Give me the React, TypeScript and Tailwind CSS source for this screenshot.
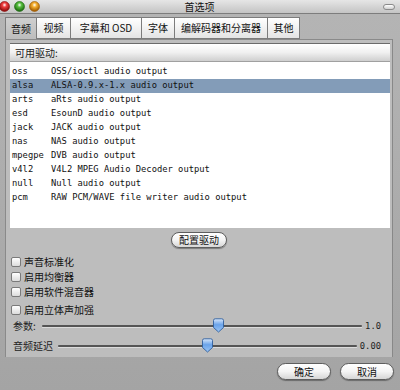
import React from "react";

const drivers: [string, string][] = [
  ["oss", "OSS/ioctl audio output"],
  ["alsa", "ALSA-0.9.x-1.x audio output"],
  ["arts", "aRts audio output"],
  ["esd", "EsounD audio output"],
  ["jack", "JACK audio output"],
  ["nas", "NAS audio output"],
  ["mpegpe", "DVB audio output"],
  ["v4l2", "V4L2 MPEG Audio Decoder output"],
  ["null", "Null audio output"],
  ["pcm", "RAW PCM/WAVE file writer audio output"],
];

const tabs: [string, string][] = [
  ["音频", "w-[32px]"],
  ["视频", "w-[34px]"],
  ["字幕和 OSD", "w-[71px]"],
  ["字体", "w-[33px]"],
  ["编解码器和分离器", "w-[93px]"],
  ["其他", "w-[32px]"],
];

function Light({ c1, c2 }: { c1: string; c2: string }) {
  return (
    <svg width="11" height="11" viewBox="0 0 11 11">
      <defs>
        <radialGradient id={"g" + c1.slice(1)} cx="50%" cy="35%" r="60%">
          <stop offset="0%" stopColor="#ffffff" stopOpacity="0.9" />
          <stop offset="35%" stopColor={c1} />
          <stop offset="100%" stopColor={c2} />
        </radialGradient>
      </defs>
      <circle cx="5.5" cy="5.5" r="5" fill={"url(#g" + c1.slice(1) + ")"} stroke={c2} strokeWidth="0.6" />
    </svg>
  );
}

function Checkbox({ label }: { label: string }) {
  return (
    <div className="flex items-center h-[15px]">
      <div className="w-[10px] h-[10px] rounded-[2px] border border-[#7a7a7a] bg-gradient-to-b from-white to-[#dcdcdc]" />
      <span className="ml-[3px] text-[10px] leading-none text-[#111]">{label}</span>
    </div>
  );
}

function Thumb() {
  return (
    <svg width="13" height="15" viewBox="0 0 13 15">
      <defs>
        <linearGradient id="th" x1="0" y1="0" x2="0" y2="1">
          <stop offset="0%" stopColor="#dbe9fb" />
          <stop offset="45%" stopColor="#6aa3ea" />
          <stop offset="100%" stopColor="#9cc6f5" />
        </linearGradient>
      </defs>
      <path d="M1.5 2.5 Q1.5 0.8 3.2 0.8 L9.8 0.8 Q11.5 0.8 11.5 2.5 L11.5 9.5 L6.5 14 L1.5 9.5 Z" fill="url(#th)" stroke="#2f5f9e" strokeWidth="0.9" />
    </svg>
  );
}

function Slider({ label, value, thumbLeft, labelW }: { label: string; value: string; thumbLeft: string; labelW: string }) {
  return (
    <div className="flex items-center h-[16px] pl-[7px]">
      <span className={"text-[10px] leading-none text-[#222] " + labelW}>{label}</span>
      <div className="relative flex-1 h-[4px]">
        <div className="absolute left-0 right-0 top-[1px] h-[2px] bg-[#555] rounded-full" />
        <div className="absolute left-0 right-0 top-[3px] h-[1px] bg-[#dcdcdc]" />
        <div className={"absolute top-[-6px] " + thumbLeft}>
          <Thumb />
        </div>
      </div>
      <span className="text-[8.8px] leading-none text-[#222] font-['DejaVu_Sans_Mono',monospace] ml-[3px] mr-[11px]">{value}</span>
    </div>
  );
}

function PillButton({ label, w }: { label: string; w: string }) {
  return (
    <div className={"h-[17px] rounded-full border border-[#5e5e5e] bg-gradient-to-b from-white via-[#f4f4f4] to-[#d6d6d6] flex items-center justify-center text-[10px] leading-none text-[#111] shadow-[0_1px_1px_rgba(0,0,0,0.35)] " + w}>
      {label}
    </div>
  );
}

export default function App() {
  return (
    <div className="w-[400px] h-[390px] flex flex-col bg-[#a6a6a6] overflow-hidden font-['Noto_Sans_CJK_SC',sans-serif]">
      {/* title bar */}
      <div className="h-[14px] flex items-center bg-gradient-to-b from-[#e6e6e6] to-[#c4c4c4] border-b border-[#7d7d7d]">
        <div className="flex items-center gap-[4px] -ml-[1px] w-[42px] -mt-[1px]">
          <Light c1="#f04040" c2="#8c0c0c" />
          <Light c1="#58c040" c2="#1d6a10" />
          <Light c1="#f6b030" c2="#a05a00" />
        </div>
        <div className="flex-1 text-center text-[10px] leading-[12px] text-[#111]">首选项</div>
        <div className="w-[42px] flex justify-end">
          <div className="w-[12px] h-[6px] rounded-full border border-[#8a8a8a] bg-gradient-to-b from-white to-[#d0d0d0] mr-[5px]" />
        </div>
      </div>

      {/* body */}
      <div className="flex-1 flex flex-col pl-[5px] pr-[8px] bg-gradient-to-b from-[#b4b4b4] to-[#a4a4a4]">
        {/* tabs */}
        <div className="flex mt-[3px] h-[22px]">
          {tabs.map(([t, w], i) => (
            <div
              key={t}
              className={
                "flex items-center justify-center text-[10px] leading-none text-[#111] border border-[#7c7c7c] " +
                (i > 0 ? "border-l-0 " : "") +
                (i === 0
                  ? "bg-gradient-to-b from-[#cfcfcf] to-[#bdbdbd] border-b-0 "
                  : "bg-gradient-to-b from-white to-[#e4e4e4] ") +
                w
              }
            >
              {t}
            </div>
          ))}
        </div>

        {/* panel */}
        <div className="h-[318px] flex flex-col bg-[#bdbdbd] border-l border-t border-[#8a8a8a] shadow-[1px_0_0_#888]">
          {/* list */}
          <div className="mt-[3px] ml-[4px] mr-[2px] h-[185px] bg-white border-t border-[#6a6a6a] flex flex-col">
            <div className="h-[18px] flex items-center pl-[5px] bg-gradient-to-b from-white via-[#f0f0f0] to-[#cfcfcf] border-b border-[#a0a0a0] text-[10px] leading-none text-[#222]">
              可用驱动:
            </div>
            <div className="pt-[3px] flex flex-col font-['DejaVu_Sans_Mono',monospace] text-[8.8px] text-[#111]">
              {drivers.map(([n, d], i) => (
                <div key={n} className={"h-[14px] flex items-center pl-[2px] " + (i === 1 ? "bg-[#839cb8]" : "")}>
                  <span className="w-[39px]">{n}</span>
                  <span>{d}</span>
                </div>
              ))}
            </div>
          </div>

          {/* configure button */}
          <div className="flex justify-center mt-[4px]">
            <PillButton label="配置驱动" w="w-[56px] !h-[16px]" />
          </div>

          {/* checkboxes */}
          <div className="flex flex-col pl-[5px] mt-[6px]">
            <Checkbox label="声音标准化" />
            <Checkbox label="启用均衡器" />
            <Checkbox label="启用软件混音器" />
            <div className="mt-[3px]">
              <Checkbox label="启用立体声加强" />
            </div>
          </div>

          {/* sliders */}
          <div className="flex flex-col mt-[1px] gap-[4px]">
            <Slider label="参数:" value="1.0" thumbLeft="left-[170px]" labelW="w-[29px]" />
            <Slider label="音频延迟" value="0.00" thumbLeft="left-[143px]" labelW="w-[45px]" />
          </div>
        </div>

        {/* bottom buttons */}
        <div className="flex justify-end gap-[9px] mt-[6px] -mr-[2px]">
          <PillButton label="确定" w="w-[54px]" />
          <PillButton label="取消" w="w-[54px]" />
        </div>
      </div>
    </div>
  );
}
